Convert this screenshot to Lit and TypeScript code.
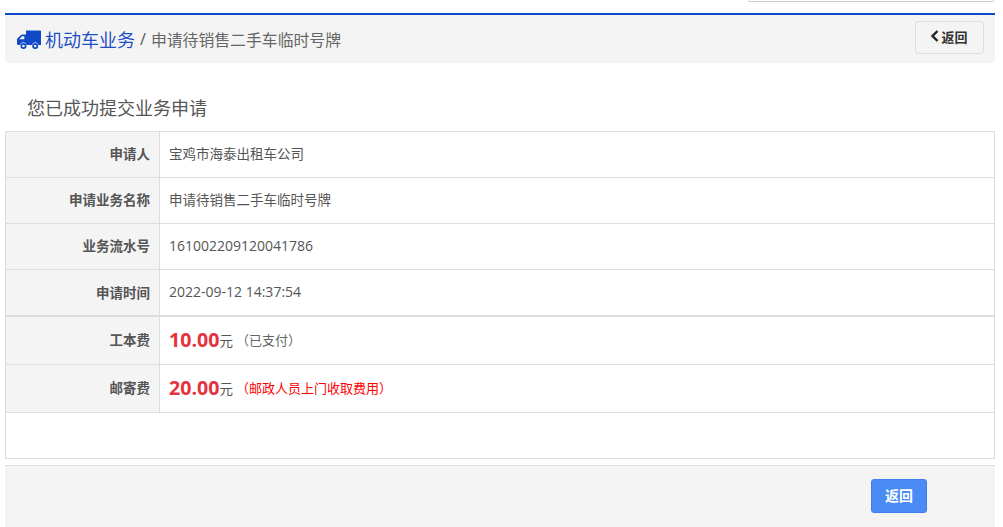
import { LitElement, html, css } from "lit";
import { customElement } from "lit/decorators.js";

const rows = [
  { k: "申请人", v: "宝鸡市海泰出租车公司", cls: "" },
  { k: "申请业务名称", v: "申请待销售二手车临时号牌", cls: "" },
  { k: "业务流水号", v: "161002209120041786", cls: "num" },
  { k: "申请时间", v: "2022-09-12 14:37:54", cls: "num" },
];

@customElement("app-root")
export class AppRoot extends LitElement {
  static styles = css`
    :host {
      display: block;
      width: 1003px;
      height: 527px;
      overflow: hidden;
      background: #fff;
      font-family: "Open Sans", "Noto Sans CJK SC", sans-serif;
      color: #555;
      font-size: 13px;
    }
    .top { height: 13px; display: flex; justify-content: flex-end; padding-right: 9px; }
    .search {
      width: 244px; height: 1px;
      border: 1px solid #ccc; border-top: 0;
      border-radius: 0 0 4px 4px;
    }
    .page { margin: 0 8px 0 5px; display: flex; flex-direction: column; }
    .head {
      height: 48px;
      border-top: 2px solid #1049c6;
      background: #f4f4f4;
      display: flex;
      align-items: flex-start;
      justify-content: space-between;
      padding: 0 11px 0 12px;
    }
    .crumb { display: flex; align-items: center; height: 48px; }
    .crumb svg { width: 24px; height: 20px; margin: 1px 4px 0 0; display: block; }
    .crumb .main { font-size: 18px; color: #1f4fc4; }
    .crumb .sep { font-size: 16px; margin: 0 5px; color: #555; }
    .crumb .sub { font-size: 15.85px; color: #666; }
    .back {
      width: 69px; height: 33px; box-sizing: border-box;
      margin-top: 6px;
      border: 1px solid #ddd; border-radius: 3px;
      background: #f4f4f4;
      display: flex; align-items: center; justify-content: center; gap: 2px;
      font-size: 13px; font-weight: 700; color: #333;
      padding-bottom: 3px;
    }
    .back svg { width: 9px; height: 12px; display: block; margin-left: -1px; }
    .title {
      font-size: 18px; color: #555;
      height: 68px; box-sizing: border-box;
      padding: 32px 0 0 22px; line-height: 26px;
    }
    .table {
      border: 1px solid #ddd;
    }
    .row { display: flex; border-bottom: 1px solid #ddd; height: 45px; }
    .row.sep { border-bottom-width: 2px; }
    .row.sep .k { padding-bottom: 2px; }
    .row.tall { height: 47px; }
    .k {
      padding: 0 9px 4px 0; flex: none; box-sizing: border-box;
      width: 154px;
      background: #f4f4f4;
      border-right: 1px solid #ddd;
      display: flex; align-items: center; justify-content: flex-end;
      font-weight: 700; color: #555; font-size: 13.5px;
    }
    .v { padding: 0 0 4px 9px; display: flex; align-items: center; color: #555; font-size: 13.5px; }
    .v.num { font-size: 14px; padding-bottom: 2px; }
    .v.fee { padding-bottom: 2px; }
    .amount { font-size: 19.6px; font-weight: 700; color: #e6323e; }
    .note { margin-left: 3px; color: #666; font-size: 13px; }
    .note.red { color: #f00; }
    .blank { height: 45px; }
    .foot {
      margin-top: 6px;
      height: 62px;
      box-sizing: border-box;
      border-top: 1px solid #ddd;
      background: #f4f4f4;
      display: flex; justify-content: flex-end; align-items: flex-start;
      padding: 13px 68px 0 0;
    }
    .primary {
      width: 56px; height: 34px; box-sizing: border-box;
      border: 1px solid #3d7fee; border-radius: 3px;
      background: #4a8bf5; color: #fff;
      display: flex; align-items: center; justify-content: center;
      font-size: 14px; font-weight: 700;
      padding-bottom: 2px;
    }
  `;

  render() {
    return html`
      <div class="top"><div class="search"></div></div>
      <div class="page">
        <div class="head">
          <div class="crumb">
            <svg viewBox="0 0 24 20" fill="#1049c6" aria-hidden="true">
              <path fill-rule="evenodd" d="M9 0.5h14.2c.4 0 .8.4.8.8V15h-2.6a3.2 3.2 0 0 0-6.3 0H9.6a3.2 3.2 0 0 0-6.3 0H1.2c-.6 0-1.2-.5-1.2-1.2V9.6c0-.6.2-1 .6-1.4L4 5c.4-.4.9-.6 1.4-.6H9zM5 6.3 2.3 9.3h5V6.3z"/>
              <path fill-rule="evenodd" d="M6.5 13a3 3 0 1 1 0 6 3 3 0 0 1 0-6zm0 1.7a1.3 1.3 0 1 0 0 2.6 1.3 1.3 0 0 0 0-2.6zM18.2 13a3 3 0 1 1 0 6 3 3 0 0 1 0-6zm0 1.7a1.3 1.3 0 1 0 0 2.6 1.3 1.3 0 0 0 0-2.6z"/>
            </svg>
            <span class="main">机动车业务</span><span class="sep">/</span><span class="sub">申请待销售二手车临时号牌</span>
          </div>
          <div class="back">
            <svg viewBox="0 0 9 12" fill="none" stroke="#222" stroke-width="2.4" aria-hidden="true"><path d="M7.5 1 2.5 6l5 5"/></svg>
            <span>返回</span>
          </div>
        </div>
        <div class="title">您已成功提交业务申请</div>
        <div class="table">
          ${rows.map(
            (r, i) => html`<div class="row ${i === 3 ? "sep" : ""}">
              <div class="k">${r.k}</div>
              <div class="v ${r.cls}">${r.v}</div>
            </div>`
          )}
          <div class="row tall">
            <div class="k">工本费</div>
            <div class="v fee"><span class="amount">10.00</span>元<span class="note">（已支付）</span></div>
          </div>
          <div class="row tall">
            <div class="k">邮寄费</div>
            <div class="v fee"><span class="amount">20.00</span>元<span class="note red">（邮政人员上门收取费用）</span></div>
          </div>
          <div class="blank"></div>
        </div>
        <div class="foot"><div class="primary">返回</div></div>
      </div>
    `;
  }
}
